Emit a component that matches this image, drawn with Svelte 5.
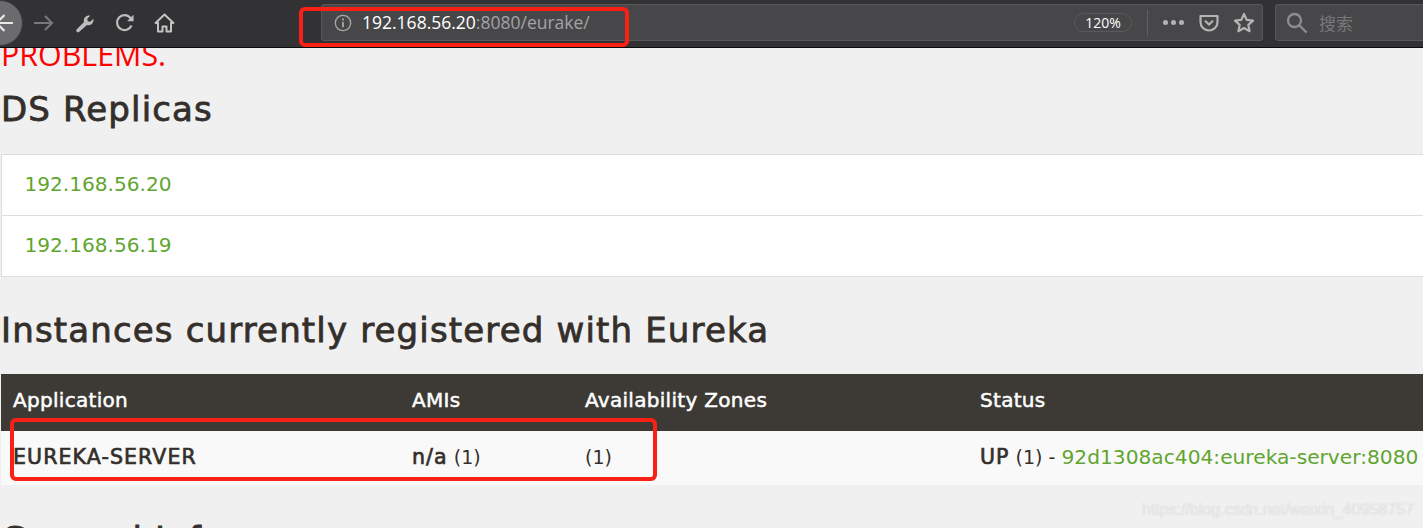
<script>
  const replicas = ['192.168.56.20', '192.168.56.19'];
</script>

<div class="page">
  <header class="toolbar">
    <button class="back" aria-label="back">
      <svg width="24" height="24" viewBox="0 0 24 24" fill="none" stroke="#e8e8e8" stroke-width="2.2">
        <path d="M1 12H18M9.500 4l-8 8 8 8" />
      </svg>
    </button>
    <svg class="ico fwd" width="22" height="22" viewBox="0 0 22 22" fill="none" stroke="#77777a" stroke-width="2.2">
      <path d="M1 11h18M12 4l7 7-7 7" />
    </svg>
    <svg class="ico wrench" width="20" height="20" viewBox="0 0 20 20" fill="#bdbdbd">
      <path d="M1.500 16.500 9 9c-.7-2.400.2-4.600 2.200-5.800 1.200-.7 2.700-.9 4-.5l-3 3 .6 2.500 2.500.6 3-3c.4 1.500.1 3-.7 4.200-1.300 1.900-3.500 2.600-5.600 2L4 19q-1.200.8-2.300-.2-1-1.200-.2-2.300z" />
    </svg>
    <svg class="ico reload" width="20" height="20" viewBox="0 0 20 20" fill="none" stroke="#bdbdbd" stroke-width="2.200">
      <path d="M16.500 12.500a7.500 7.500 0 1 1-1-7.500L18 7" />
      <path d="M18.500 1.800v6.400h-6.400z" fill="#bdbdbd" stroke="none" />
    </svg>
    <svg class="ico home" width="21" height="20" viewBox="0 0 21 20" fill="none" stroke="#c4c4c4" stroke-width="2">
      <path d="M1 10.500 10.500 1.500 20 10.500M4 9v9.500h4.500v-5h4v5H17V9" stroke-linejoin="round" />
    </svg>

    <div class="urlbar">
      <svg width="18" height="18" viewBox="0 0 18 18" fill="none" stroke="#a8a8a8" stroke-width="1.300">
        <circle cx="9" cy="9" r="7.700" />
        <path d="M9 8v5.200M9 4.600v1.800" stroke-width="1.800" />
      </svg>
      <span class="url"><span class="host">192.168.56.20</span>:8080/eurake/</span>
      <span class="zoom">120%</span>
      <span class="sep"></span>
      <span class="dots"><i></i><i></i><i></i></span>
      <svg class="pocket" width="20" height="18" viewBox="0 0 20 18" fill="none" stroke="#b4b4b4" stroke-width="2.200">
        <path d="M1.500 2h17v6a8.500 8.500 0 0 1-17 0z" stroke-linejoin="round" />
        <path d="M6 6.800l4 3.700 4-3.700" />
      </svg>
      <svg class="star" width="22" height="21" viewBox="0 0 22 21" fill="none" stroke="#b4b4b4" stroke-width="2.200">
        <path d="M11 2l2.700 5.900 6.300.7-4.700 4.300 1.300 6.300-5.600-3.200-5.600 3.200 1.300-6.300L2 8.600l6.300-.7z" stroke-linejoin="round" />
      </svg>
    </div>

    <div class="search">
      <svg width="22" height="22" viewBox="0 0 22 22" fill="none" stroke="#8d8d8f" stroke-width="2.400">
        <circle cx="8.500" cy="8.500" r="6.500" />
        <path d="M13.500 13.500l7 7" />
      </svg>
      <span>搜索</span>
    </div>
  </header>

  <main>
    <div class="clip"><p class="problems">PROBLEMS.</p></div>
    <h2 class="first">DS Replicas</h2>
    <ul class="replicas">
      {#each replicas as ip}
        <li><a href="#top">{ip}</a></li>
      {/each}
    </ul>

    <h2 class="second">Instances currently registered with Eureka</h2>
    <table>
      <thead>
        <tr>
          <th class="c1">Application</th>
          <th class="c2">AMIs</th>
          <th class="c3">Availability Zones</th>
          <th>Status</th>
        </tr>
      </thead>
      <tbody>
        <tr>
          <td><b>EUREKA-SERVER</b></td>
          <td><b>n/a</b> (1)</td>
          <td>(1)</td>
          <td><b>UP</b> (1) - <a href="#top">92d1308ac404:eureka-server:8080</a></td>
        </tr>
      </tbody>
    </table>

    <h2 class="third">General Info</h2>
  </main>

  <div class="mark m1"></div>
  <div class="mark m2"></div>
  <div class="watermark">https://blog.csdn.net/weixin_40958757</div>
</div>

<style>
  :global(body) {
    margin: 0;
    background: #f0f0f0;
    overflow: hidden;
  }

  .page {
    position: relative;
    width: 1423px;
    height: 528px;
    overflow: hidden;
    font-family: "DejaVu Sans", sans-serif;
    color: #342f2b;
  }

  .toolbar {
    display: flex;
    align-items: center;
    box-sizing: content-box;
    height: 45px;
    padding-bottom: 2px;
    background: #323234;
    border-bottom: 1px solid #0c0c0d;
  }

  .back {
    flex: none;
    width: 46px;
    height: 46px;
    margin-left: -23px;
    padding: 0 0 0 17px;
    border: 1px solid #3c3c3e;
    border-radius: 50%;
    background: #6b6b6d;
    display: flex;
    align-items: center;
  }

  .ico {
    flex: none;
  }

  .fwd { margin-left: 10px; }
  .wrench { margin-left: 20px; }
  .reload { margin-left: 20px; }
  .home { margin-left: 19px; }

  .urlbar {
    flex: none;
    display: flex;
    align-items: center;
    box-sizing: border-box;
    width: 942px;
    height: 37px;
    margin-left: 146px;
    padding: 0 7px 0 12px;
    border: 1px solid #59595b;
    border-radius: 3px;
    background: #474749;
  }

  .url {
    margin: 0 0 2px 10px;
    font-size: 17.500px;
    font-family: "Open Sans", sans-serif;
    color: #a3a3a5;
  }

  .host { color: #fff; }

  .zoom {
    margin-left: auto;
    width: 58px;
    height: 19px;
    box-sizing: border-box;
    border: 1px solid #5a5a5c;
    border-radius: 10px;
    font-size: 14px;
    line-height: 17px;
    text-align: center;
    font-family: "Open Sans", sans-serif;
    color: #fff;
  }

  .sep {
    width: 1px;
    height: 26px;
    margin-left: 15px;
    background: #5f6064;
  }

  .dots {
    display: flex;
    gap: 3px;
    margin-left: 15px;
  }

  .dots i {
    width: 5px;
    height: 5px;
    border-radius: 50%;
    background: #b4b4b4;
  }

  .pocket { margin-left: 15px; }
  .star { margin-left: 14px; }

  .search {
    flex: none;
    display: flex;
    align-items: center;
    gap: 11px;
    box-sizing: border-box;
    width: 160px;
    height: 37px;
    margin-left: 12px;
    padding-left: 10px;
    border: 1px solid #59595b;
    border-radius: 3px;
    background: #474749;
    font-size: 17px;
    font-family: "Noto Sans CJK SC", sans-serif;
    color: #77777a;
  }

  .clip {
    height: 22px;
    overflow: hidden;
    display: flex;
    align-items: flex-end;
  }

  .problems {
    margin: 0 0 3.500px 1px;
    font-size: 30.400px;
    line-height: 24px;
    font-family: "Open Sans", sans-serif;
    color: #ff0000;
  }

  h2 {
    margin: 0;
    font-size: 34px;
    font-weight: 400;
    line-height: 40px;
    letter-spacing: 1.150px;
    -webkit-text-stroke: 0.800px currentColor;
    color: #342f2b;
  }

  .first {
    margin: 19px 0 25px 1px;
  }

  .replicas {
    margin: 0 0 0 1px;
    padding: 0;
    list-style: none;
    background: #fff;
    border: 1px solid #ddd;
    border-right: 0;
  }

  .replicas li {
    height: 60px;
    padding-left: 22.500px;
    font-size: 20.100px;
    line-height: 58px;
  }

  .replicas li + li {
    border-top: 1px solid #ddd;
  }

  a {
    color: #5fa52f;
    text-decoration: none;
  }

  .second {
    margin: 33px 0 24px 1px;
  }

  table {
    width: 1422px;
    margin-left: 1px;
    border-collapse: collapse;
    table-layout: fixed;
    font-size: 19px;
  }

  th {
    height: 51px;
    padding: 0 0 6px 12px;
    background: #3d3a35;
    color: #fff;
    font-size: 20px;
    font-weight: 400;
    letter-spacing: 0.300px;
    -webkit-text-stroke: 0.500px currentColor;
    text-align: left;
  }

  .c1 { width: 387px; }
  .c2 { width: 161px; }
  .c3 { width: 383px; }

  td {
    height: 52px;
    padding: 0 0 2px 12px;
    background: #f9f9f9;
    white-space: nowrap;
  }

  td a {
    font-size: 20.200px;
  }

  b {
    font-size: 20.500px;
    font-weight: 400;
    letter-spacing: 1.100px;
    -webkit-text-stroke: 0.700px currentColor;
  }

  .third {
    margin: 34px 0 0 1px;
  }

  .mark {
    position: absolute;
    box-sizing: border-box;
    border: 4px solid #fb2016;
    border-radius: 6px;
  }

  .m1 {
    left: 299px;
    top: 7px;
    width: 330px;
    height: 40px;
  }

  .m2 {
    left: 10px;
    top: 418px;
    width: 647px;
    height: 63px;
  }

  .watermark {
    position: absolute;
    left: 1142px;
    top: 501px;
    font-family: "Liberation Sans", sans-serif;
    font-size: 16px;
    color: rgba(255, 255, 255, 0.7);
    text-shadow: 0 0 1px #bbb;
  }
</style>
